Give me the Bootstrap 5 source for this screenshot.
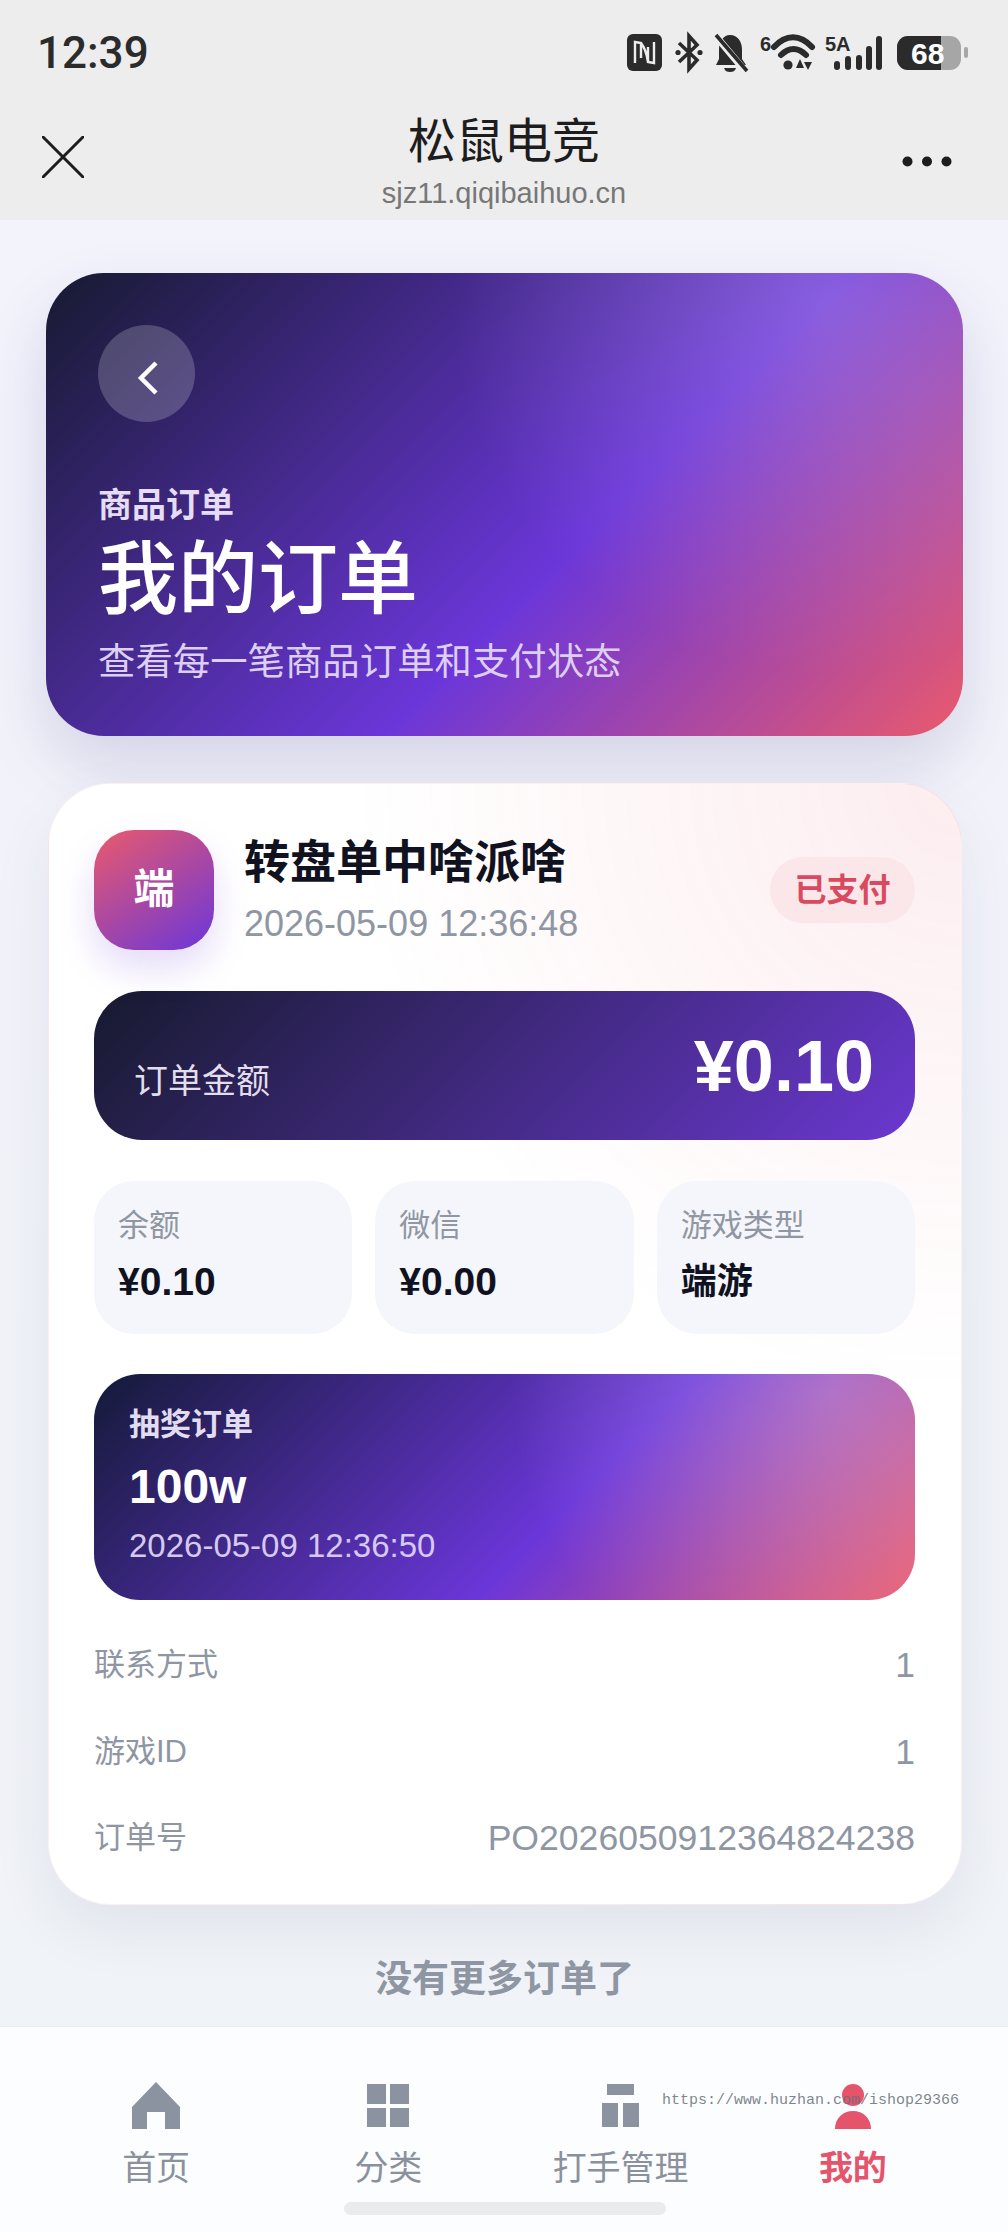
<!DOCTYPE html>
<html lang="zh-CN">

<head>
    <meta charset="UTF-8">
    <title>松鼠电竞 – 我的订单</title>
    <link href="https://cdn.jsdelivr.net/npm/bootstrap@5.3.3/dist/css/bootstrap.min.css" rel="stylesheet">
    <style>
        body {
            width: 1008px;
            height: 2232px;
            overflow: hidden;
            background: linear-gradient(180deg, #f3f3fc 0%, #f0f3f7 100%);
            font-family: "Liberation Sans", "Noto Sans CJK SC", sans-serif;
        }

        .app-top {
            height: 220px;
            background: #ededed;
        }

        .status-row {
            height: 90px;
            padding: 30px 39px 0 37px;
        }

        .status-time {
            font-size: 44px;
            line-height: 46px;
            font-weight: 500;
            color: #2b2b2b;
            font-family: Roboto, "Liberation Sans", sans-serif;
        }

        .status-icons {
            height: 46px;
            margin-top: -1px;
        }

        .title-row {
            height: 130px;
            padding: 20px 56px 8px 42px;
        }

        .title-main {
            font-size: 48px;
            line-height: 60px;
            color: #1d1d1d;
        }

        .title-url {
            font-size: 29px;
            line-height: 34px;
            margin-top: 4px;
            color: #777;
        }

        .title-mid {
            width: 300px;
            margin-left: 22px;
        }

        .title-close {
            margin-top: -8px;
        }

        .page-main {
            padding: 53px 45px 0 46px;
        }

        .hero-box {
            height: 463px;
            padding: 52px;
            border-radius: 58px;
            color: #fff;
            background:
                radial-gradient(circle at 85% 6%, rgba(255, 255, 255, .2), rgba(255, 255, 255, 0) 42%),
                linear-gradient(135deg, #161a30 0%, #6b36d9 58%, #ea5a6c 100%);
            box-shadow: 0 30px 64px rgba(60, 50, 130, .16);
        }

        .back-circle {
            width: 97px;
            height: 97px;
            border-radius: 50%;
            background: rgba(255, 255, 255, .2);
        }

        .back-arrow {
            margin-top: 9px;
        }

        .hero-kicker {
            margin-top: 61px;
            font-size: 34px;
            line-height: 44px;
            font-weight: 700;
            color: #e6dcf5;
        }

        .hero-title {
            margin-top: 8px;
            font-size: 80px;
            line-height: 90px;
            font-weight: 500;
        }

        .hero-sub {
            margin-top: 13px;
            font-size: 37.4px;
            line-height: 48px;
            color: #dccff2;
        }

        .order-box {
            margin: 47px 1px 0 2px;
            padding: 46px 46px 44px 45px;
            border: 1px solid rgba(232, 90, 110, .09);
            border-radius: 62px;
            background:
                radial-gradient(circle at 100% 0%, rgba(232, 90, 110, .11), rgba(232, 90, 110, 0) 42%),
                #fff;
            box-shadow: 0 24px 60px rgba(40, 50, 90, .08);
        }

        .avatar-box {
            width: 120px;
            height: 120px;
            border-radius: 40px;
            font-size: 41px;
            font-weight: 700;
            color: #fff;
            background: linear-gradient(145deg, #ea5a6c 0%, #6b36d9 100%);
            box-shadow: 0 18px 36px rgba(107, 54, 217, .18);
        }

        .order-head {
            margin-left: 30px;
        }

        .order-name {
            font-size: 46px;
            line-height: 60px;
            font-weight: 700;
            color: #10131f;
            margin-top: -2px;
        }

        .order-time {
            margin-top: 10px;
            font-size: 36px;
            line-height: 44px;
            color: #8f96a3;
        }

        .paid-pill {
            width: 145px;
            height: 66px;
            border-radius: 33px;
            font-size: 32px;
            font-weight: 700;
            color: #d9495f;
            background: #fbe6e9;
        }

        .amount-box {
            height: 149px;
            margin-top: 41px;
            padding: 0 41px 0 40px;
            border-radius: 48px;
            color: #fff;
            background: linear-gradient(135deg, #161a2e 0%, #6b38d0 100%);
        }

        .amount-label {
            font-size: 34px;
            line-height: 44px;
            padding-bottom: 37px;
            color: #e2deee;
        }

        .amount-value {
            font-size: 72px;
            line-height: 84px;
            font-weight: 700;
            padding-bottom: 32px;
        }

        .stat-row {
            margin-top: 41px;
            gap: 23px;
        }

        .stat-box {
            flex: 1 1 0;
            height: 153px;
            padding: 25px 24px 0;
            border-radius: 40px;
            background: #f4f6fb;
        }

        .stat-label {
            font-size: 31px;
            line-height: 40px;
            color: #9096a2;
        }

        .stat-value {
            margin-top: 11px;
            font-size: 39px;
            line-height: 50px;
            font-weight: 700;
            color: #10131f;
        }

        .stat-word {
            font-size: 36px;
        }

        .draw-box {
            height: 226px;
            margin-top: 40px;
            padding: 31px 36px 0 35px;
            border-radius: 46px;
            color: #fff;
            background:
                radial-gradient(circle at 90% 8%, rgba(255, 255, 255, .26), rgba(255, 255, 255, 0) 42%),
                linear-gradient(135deg, #141a38 0%, #6b36d9 58%, #ea5a6c 100%);
        }

        .draw-kicker {
            font-size: 31px;
            line-height: 40px;
            font-weight: 700;
            color: #e2dcf0;
        }

        .draw-name {
            margin-top: 12px;
            font-size: 48px;
            line-height: 60px;
            font-weight: 700;
        }

        .draw-time {
            margin-top: 7px;
            font-size: 33px;
            line-height: 44px;
            color: #d6c9f0;
        }

        .info-list {
            margin-top: 43px;
            gap: 42.500px;
        }

        .info-line {
            line-height: 44px;
            color: #8f96a3;
        }

        .info-key {
            font-size: 31px;
        }

        .info-val {
            font-size: 35.600px;
        }

        .end-note {
            margin-top: 50px;
            font-size: 37px;
            line-height: 50px;
            font-weight: 700;
            color: #8f96a3;
        }

        .tab-wrap {
            height: 206px;
            padding: 55px 39px 0 40px;
            background: #fbfdfe;
            border-top: 1px solid #e9ebef;
        }

        .tab-cell {
            flex: 1 1 0;
            font-size: 34px;
            line-height: 44px;
            color: #8b919c;
        }

        .tab-cell svg {
            margin-bottom: 17px;
        }

        .tab-on {
            font-weight: 700;
            color: #e5546a;
        }

        .home-bar {
            width: 322px;
            height: 13px;
            margin-top: 12px;
            border-radius: 7px;
            background: #e9ebed;
        }

        .water-mark {
            top: 65px;
            left: 662px;
            font-family: "Liberation Mono", monospace;
            font-size: 15px;
            line-height: 18px;
            white-space: nowrap;
            color: rgba(105, 110, 120, .85);
        }
    </style>
</head>

<body class="d-flex flex-column">
    <div class="app-top flex-shrink-0">
        <div class="status-row d-flex justify-content-between align-items-start">
            <div class="status-time">12:39</div>
            <svg class="status-icons" width="342" height="46" viewBox="628 30 342 46">
                <!-- nfc -->
                <rect x="628" y="35" width="35" height="37" rx="6" fill="#2b2b2b" />
                <path d="M636 64V43l6 1v15M655 43v21l-6-1V48M642 44c4 5 6 12 7 19" fill="none" stroke="#ededed" stroke-width="2.4" />
                <!-- bluetooth -->
                <path d="M680 44l18 17-8 9V37l8 9-18 17" fill="none" stroke="#2b2b2b" stroke-width="3.6" />
                <circle cx="679" cy="53.500" r="2.600" fill="#2b2b2b" />
                <circle cx="701" cy="53.500" r="2.600" fill="#2b2b2b" />
                <!-- bell off -->
                <path d="M731 36c8 0 12 7 12 15v9l4 6h-30l3-6v-9c0-8 4-15 11-15z" fill="#2b2b2b" />
                <path d="M725 69h12c-1 3-3 4-6 4s-5-1-6-4z" fill="#2b2b2b" />
                <path d="M716 36l30 36" stroke="#ededed" stroke-width="7" />
                <path d="M717 36l31 36" stroke="#2b2b2b" stroke-width="3.600" />
                <!-- wifi -->
                <text x="761" y="52" font-size="20" font-weight="700" fill="#2b2b2b">6</text>
                <path d="M775 48c12-13 26-13 38 0M782 56c8-8 17-8 25 0" fill="none" stroke="#2b2b2b" stroke-width="6" stroke-linecap="round" />
                <circle cx="789" cy="66" r="4.600" fill="#2b2b2b" />
                <path d="M801 60l-4 9h8zM809 71l-4-8h8z" fill="#2b2b2b" />
                <!-- signal -->
                <text x="826" y="52" font-size="20" font-weight="700" fill="#2b2b2b">5A</text>
                <rect x="835" y="62" width="6" height="9" rx="3" fill="#2b2b2b" />
                <rect x="846" y="57" width="6" height="14" rx="3" fill="#2b2b2b" />
                <rect x="857" y="56" width="6" height="15" rx="3" fill="#2b2b2b" />
                <rect x="867" y="47" width="6" height="24" rx="3" fill="#2b2b2b" />
                <rect x="877" y="37" width="6" height="34" rx="3" fill="#2b2b2b" />
                <!-- battery -->
                <rect x="898" y="37" width="64" height="34" rx="11" fill="#a6a6a6" />
                <path d="M909 37h33v34h-33a11 11 0 0 1-11-11V48a11 11 0 0 1 11-11z" fill="#2b2b2b" />
                <rect x="965" y="48" width="4" height="11" rx="2" fill="#a6a6a6" />
                <text x="912" y="65" font-size="30" font-weight="700" fill="#fff">68</text>
            </svg>
        </div>
        <div class="title-row d-flex justify-content-between align-items-center">
            <svg class="title-close" width="42" height="42" viewBox="0 0 42 42">
                <path d="M1 1l40 40M41 1L1 41" stroke="#1d1d1d" stroke-width="3" stroke-linecap="round" />
            </svg>
            <div class="title-mid text-center">
                <div class="title-main">松鼠电竞</div>
                <div class="title-url">sjz11.qiqibaihuo.cn</div>
            </div>
            <svg width="50" height="11" viewBox="0 0 50 11">
                <circle cx="5.500" cy="5.500" r="5" fill="#1d1d1d" />
                <circle cx="25" cy="5.500" r="5" fill="#1d1d1d" />
                <circle cx="44.500" cy="5.500" r="5" fill="#1d1d1d" />
            </svg>
        </div>
    </div>

    <div class="page-main flex-grow-1">
        <div class="hero-box">
            <div class="back-circle d-flex align-items-center justify-content-center">
                <svg class="back-arrow" width="24" height="34" viewBox="0 0 24 34">
                    <path d="M21 2L6 17l15 15" fill="none" stroke="#fff" stroke-width="4.500" />
                </svg>
            </div>
            <div class="hero-kicker">商品订单</div>
            <div class="hero-title">我的订单</div>
            <div class="hero-sub">查看每一笔商品订单和支付状态</div>
        </div>

        <div class="order-box">
            <div class="d-flex align-items-center">
                <div class="avatar-box d-flex align-items-center justify-content-center flex-shrink-0">端</div>
                <div class="order-head flex-grow-1">
                    <div class="order-name">转盘单中啥派啥</div>
                    <div class="order-time">2026-05-09 12:36:48</div>
                </div>
                <div class="paid-pill d-flex align-items-center justify-content-center flex-shrink-0">已支付</div>
            </div>

            <div class="amount-box d-flex justify-content-between align-items-end">
                <div class="amount-label">订单金额</div>
                <div class="amount-value">¥0.10</div>
            </div>

            <div class="stat-row d-flex">
                <div class="stat-box">
                    <div class="stat-label">余额</div>
                    <div class="stat-value">¥0.10</div>
                </div>
                <div class="stat-box">
                    <div class="stat-label">微信</div>
                    <div class="stat-value">¥0.00</div>
                </div>
                <div class="stat-box">
                    <div class="stat-label">游戏类型</div>
                    <div class="stat-value stat-word">端游</div>
                </div>
            </div>

            <div class="draw-box">
                <div class="draw-kicker">抽奖订单</div>
                <div class="draw-name">100w</div>
                <div class="draw-time">2026-05-09 12:36:50</div>
            </div>

            <div class="info-list d-flex flex-column">
                <div class="info-line d-flex justify-content-between">
                    <span class="info-key">联系方式</span><span class="info-val">1</span>
                </div>
                <div class="info-line d-flex justify-content-between">
                    <span class="info-key">游戏ID</span><span class="info-val">1</span>
                </div>
                <div class="info-line d-flex justify-content-between">
                    <span class="info-key">订单号</span><span class="info-val">PO2026050912364824238</span>
                </div>
            </div>
        </div>

        <div class="end-note text-center">没有更多订单了</div>
    </div>

    <div class="tab-wrap position-relative flex-shrink-0">
        <div class="d-flex">
            <div class="tab-cell d-flex flex-column align-items-center">
                <svg width="50" height="47" viewBox="0 0 50 47">
                    <path fill-rule="evenodd" d="M25 0l24 25v22H34V30H16v17H1V25z" fill="#8b93a1" />
                </svg>
                <span>首页</span>
            </div>
            <div class="tab-cell d-flex flex-column align-items-center">
                <svg width="42" height="47" viewBox="0 0 42 47">
                    <rect x="0" y="2" width="19" height="20" fill="#8b93a1" />
                    <rect x="23" y="2" width="19" height="20" fill="#8b93a1" />
                    <rect x="0" y="26" width="19" height="19" fill="#8b93a1" />
                    <rect x="23" y="26" width="19" height="19" fill="#8b93a1" />
                </svg>
                <span>分类</span>
            </div>
            <div class="tab-cell d-flex flex-column align-items-center">
                <svg width="37" height="47" viewBox="0 0 37 47">
                    <rect x="5" y="2" width="27" height="11" fill="#8b93a1" />
                    <rect x="0" y="21" width="16" height="24" fill="#8b93a1" />
                    <rect x="21" y="21" width="16" height="24" fill="#8b93a1" />
                </svg>
                <span>打手管理</span>
            </div>
            <div class="tab-cell tab-on d-flex flex-column align-items-center">
                <svg width="36" height="47" viewBox="0 0 36 47">
                    <circle cx="18" cy="13" r="11" fill="#e5546a" />
                    <path d="M0 47c0-11 8-18 18-18s18 7 18 18z" fill="#e5546a" />
                </svg>
                <span>我的</span>
            </div>
        </div>
        <div class="home-bar mx-auto"></div>
        <div class="water-mark position-absolute">https://www.huzhan.com/ishop29366</div>
    </div>

    <script src="https://cdn.jsdelivr.net/npm/bootstrap@5.3.3/dist/js/bootstrap.bundle.min.js"></script>
</body>

</html>
